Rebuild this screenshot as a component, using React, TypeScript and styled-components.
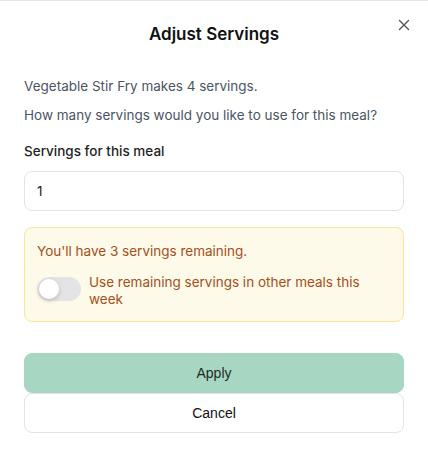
import React, { useState } from "react";
import styled, { createGlobalStyle } from "styled-components";

const GlobalStyle = createGlobalStyle`
  html, body {
    margin: 0;
    padding: 0;
    background: #ffffff;
  }
  body {
    font-family: "Inter", "Noto Sans", sans-serif;
    -webkit-font-smoothing: antialiased;
  }
`;

const Dialog = styled.div`
  position: relative;
  box-sizing: border-box;
  width: 428px;
  height: 456px;
  border-top: 1px solid #e5e5e5;
  padding: 21px 24px 24px;
  display: flex;
  flex-flow: column;
  background: #ffffff;
`;

const Title = styled.h2`
  margin: 0;
  text-align: center;
  font-size: 17px;
  line-height: 24px;
  font-weight: 600;
  color: #111111;
`;

const CloseButton = styled.button`
  position: absolute;
  top: 16px;
  right: 16px;
  width: 16px;
  height: 16px;
  padding: 0;
  border: 0;
  background: none;
  color: #555555;
  display: flex;
  align-items: center;
  justify-content: center;
  cursor: pointer;
`;

const Body = styled.div`
  margin-top: 32px;
  display: flex;
  flex-flow: column;
`;

const Text = styled.p`
  margin: 0 0 12px;
  font-size: 13.5px;
  line-height: 17px;
  color: #4b5563;
`;

const Label = styled.label`
  margin-top: 7px;
  font-size: 13.5px;
  line-height: 17px;
  font-weight: 500;
  color: #1f1f1f;
`;

const Input = styled.input`
  box-sizing: border-box;
  margin-top: 11px;
  width: 100%;
  height: 40px;
  padding: 0 12px;
  border: 1px solid #e3e3e3;
  border-radius: 8px;
  font-family: inherit;
  font-size: 13.5px;
  color: #222222;
  :focus {
    outline: none;
  }
`;

const Notice = styled.div`
  box-sizing: border-box;
  margin-top: 16px;
  height: 95px;
  padding: 15px 12px 12px;
  border: 1px solid #fbe49a;
  border-radius: 8px;
  background: #fefae9;
  color: #a3501c;
  display: flex;
  flex-flow: column;
  gap: 14px;
`;

const NoticeText = styled.div`
  font-size: 13.5px;
  line-height: 17px;
`;

const ToggleRow = styled.label`
  display: flex;
  align-items: flex-start;
  gap: 8px;
  font-size: 13.5px;
  line-height: 17px;
  cursor: pointer;
`;

const Track = styled.span<{ on: boolean }>`
  flex: none;
  position: relative;
  width: 44px;
  height: 24px;
  margin-top: 3px;
  border-radius: 12px;
  background: ${(p) => (p.on ? "#6fbf9d" : "#e4e4e7")};
  transition: background 0.2s;
`;

const Knob = styled.span<{ on: boolean }>`
  position: absolute;
  top: 2px;
  left: ${(p) => (p.on ? "22px" : "2px")};
  width: 20px;
  height: 20px;
  border-radius: 50%;
  background: #ffffff;
  box-shadow: 0 2px 5px rgba(0, 0, 0, 0.18);
  transition: left 0.2s;
`;

const Actions = styled.div`
  margin-top: 31px;
  display: flex;
  flex-flow: column;
`;

const Button = styled.button<{ primary?: boolean }>`
  box-sizing: border-box;
  width: 100%;
  height: 40px;
  border-radius: 8px;
  border: 1px solid ${(p) => (p.primary ? "#a7d7c2" : "#e3e3e3")};
  background: ${(p) => (p.primary ? "#a7d7c2" : "#ffffff")};
  font-family: "Liberation Sans", Arial, sans-serif;
  font-size: 14px;
  color: ${(p) => (p.primary ? "#1f2a24" : "#111111")};
  cursor: pointer;
`;

export default function App() {
  const [servings, setServings] = useState("1");
  const [useRest, setUseRest] = useState(false);
  const remaining = 4 - (parseInt(servings, 10) || 0);

  return (
    <>
      <GlobalStyle />
      <Dialog>
        <CloseButton aria-label="Close">
          <svg width="12" height="12" viewBox="0 0 12 12" fill="none">
            <path
              d="M1.5 1.5l9 9M10.5 1.5l-9 9"
              stroke="currentColor"
              strokeWidth="1.4"
              strokeLinecap="round"
            />
          </svg>
        </CloseButton>
        <Title>Adjust Servings</Title>
        <Body>
          <Text>Vegetable Stir Fry makes 4 servings.</Text>
          <Text>How many servings would you like to use for this meal?</Text>
          <Label htmlFor="servings">Servings for this meal</Label>
          <Input
            id="servings"
            value={servings}
            onChange={(e) => setServings(e.target.value)}
          />
          <Notice>
            <NoticeText>You'll have {remaining} servings remaining.</NoticeText>
            <ToggleRow onClick={() => setUseRest(!useRest)}>
              <Track on={useRest}>
                <Knob on={useRest} />
              </Track>
              <span>Use remaining servings in other meals this week</span>
            </ToggleRow>
          </Notice>
        </Body>
        <Actions>
          <Button primary>Apply</Button>
          <Button>Cancel</Button>
        </Actions>
      </Dialog>
    </>
  );
}
